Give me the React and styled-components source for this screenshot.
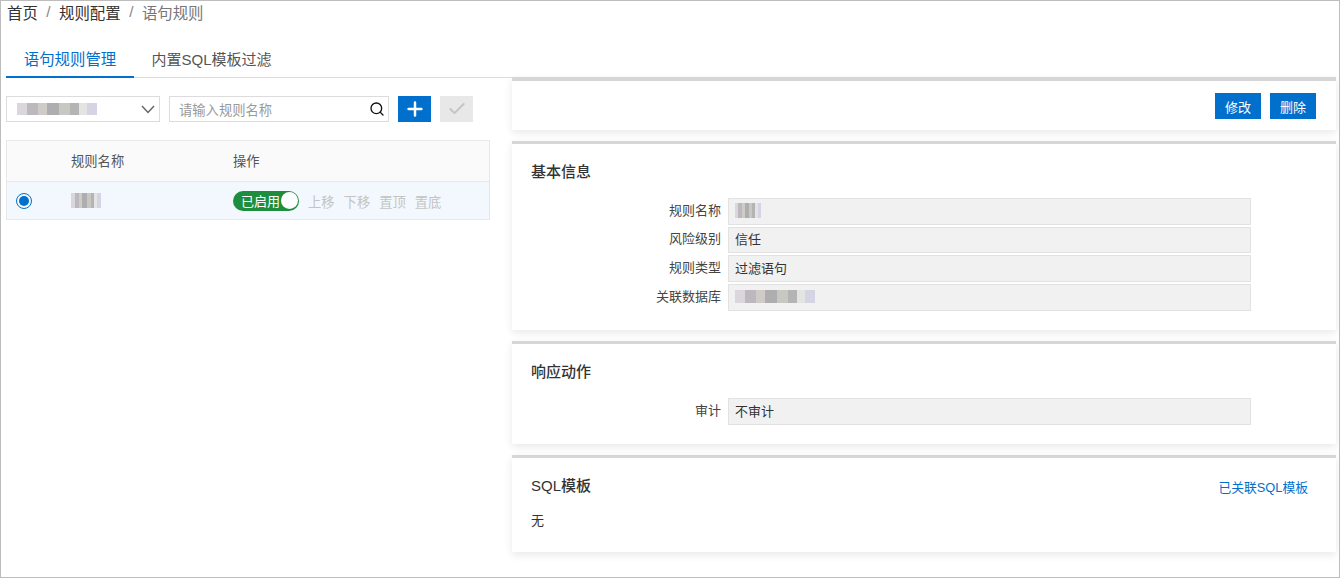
import styled, { createGlobalStyle } from "styled-components";
import { Search, Plus, Check } from "lucide-react";

const GlobalStyle = createGlobalStyle`
    html, body { margin: 0; padding: 0; background: #fff; }
    body {
        font-family: "Liberation Sans", "Noto Sans CJK SC", sans-serif;
        font-size: 13px;
        color: #333;
    }
`

const Frame = styled("div")`
    box-sizing: border-box;
    width: 1340px;
    height: 578px;
    border: 1px solid #bdbdbd;
    overflow: hidden;
`

const Breadcrumb = styled("div")`
    display: flex;
    align-items: center;
    height: 22px;
    padding-left: 6px;
    font-size: 15.4px;
`
const Crumb = styled("span")`
    color: ${(p) => (p.$current ? "#777" : "#333")};
`
const Slash = styled("span")`
    margin: 0 8.5px;
    color: #888;
`

const Tabs = styled("div")`
    display: flex;
    height: 37px;
    margin: 17px 0 0 5px;
    width: 506px;
    border-bottom: 1px solid #ddd;
`
const Tab = styled("div")`
    display: flex;
    align-items: center;
    justify-content: center;
    box-sizing: border-box;
    width: ${(p) => p.$width}px;
    height: 38px;
    font-size: ${(p) => (p.$active ? "15.4px" : "15px")};
    color: ${(p) => (p.$active ? "#0070cc" : "#555")};
    border-bottom: 2px solid ${(p) => (p.$active ? "#0070cc" : "transparent")};
`

const Body = styled("div")`
    display: flex;
    margin-top: -1px;
`
const LeftColumn = styled("div")`
    width: 511px;
    padding: 19px 21px 0 5px;
    box-sizing: border-box;
`
const RightColumn = styled("div")`
    width: 824px;
    display: flex;
    flex-direction: column;
    gap: 11px;
`

const Toolbar = styled("div")`
    display: flex;
    gap: 9px;
    height: 26px;
`
const SelectBox = styled("div")`
    display: flex;
    align-items: center;
    justify-content: space-between;
    box-sizing: border-box;
    width: 154px;
    border: 1px solid #dcdcdc;
    padding: 0 4px 0 10px;
`
const SearchBox = styled("div")`
    display: flex;
    align-items: center;
    justify-content: space-between;
    box-sizing: border-box;
    width: 220px;
    border: 1px solid #dcdcdc;
    padding: 0 3px 0 9px;
    color: #999;
    font-size: 13.3px;
`
const IconButton = styled("button")`
    display: flex;
    align-items: center;
    justify-content: center;
    width: 33px;
    height: 26px;
    padding: 0;
    border: 0;
    background: ${(p) => (p.$disabled ? "#e8e8e8" : "#0070cc")};
    color: ${(p) => (p.$disabled ? "#c4c4c4" : "#fff")};
`

// the reference has these values mosaicked out, so they stay blocks of grey
const Smudge = styled("span")`
    display: inline-block;
    width: ${(p) => p.$width}px;
    height: ${(p) => p.$height}px;
    background:
        linear-gradient(90deg,
            #d9d6dc 0 12%, #bdb8bd 12% 26%, #cfccc8 26% 38%, #aeaeb0 38% 52%,
            #c8c8c2 52% 66%, #b4b4b4 66% 78%, #e4e4e2 78% 88%, #d4d4e4 88% 100%);
    filter: blur(0.6px);
`

const Table = styled("div")`
    margin-top: 18px;
    width: 484px;
    box-sizing: border-box;
    border: 1px solid #e8e8e8;
`
const Row = styled("div")`
    display: grid;
    grid-template-columns: 64px 162px 1fr;
    align-items: center;
    box-sizing: border-box;
    height: ${(p) => p.$height}px;
    background: ${(p) => p.$bg};
    border-bottom: ${(p) => (p.$line ? "1px solid #e8e8e8" : "0")};
    padding-bottom: ${(p) => (p.$line ? "2px" : "0")};
    color: #555;
    font-size: 13.3px;
`
const Radio = styled("span")`
    display: block;
    box-sizing: border-box;
    width: 16px;
    height: 16px;
    margin-left: 9px;
    border-radius: 50%;
    border: 1px solid #0070cc;
    background: #f2f8fd;
    position: relative;
    &::after {
        content: "";
        position: absolute;
        inset: 2px;
        border-radius: 50%;
        background: #0070cc;
    }
`
const Actions = styled("div")`
    display: flex;
    align-items: center;
    gap: 9px;
`
const Switch = styled("div")`
    display: flex;
    align-items: center;
    justify-content: space-between;
    box-sizing: border-box;
    width: 66px;
    height: 20px;
    padding: 0 1px 0 8px;
    border-radius: 10px;
    background: #1e8e3e;
    color: #fff;
    font-size: 13px;
    &::after {
        content: "";
        width: 17px;
        height: 17px;
        border-radius: 50%;
        background: #fff;
    }
`
const Move = styled("span")`
    color: #c4c4c4;
    font-size: 13.3px;
    padding-top: 1px;
`

const Panel = styled("section")`
    box-sizing: border-box;
    height: ${(p) => p.$height}px;
    border-top: ${(p) => p.$bar || 3}px solid #d6d6d6;
    background: #fff;
    box-shadow: 0 3px 8px rgba(0, 0, 0, 0.09);
`
const ButtonBar = styled("div")`
    display: flex;
    justify-content: flex-end;
    gap: 9px;
    padding: 12px 20px 0 0;
`
const ActionButton = styled("button")`
    width: 46px;
    height: 26px;
    padding: 0;
    border: 0;
    background: #0070cc;
    color: #fff;
    font-family: inherit;
    font-size: 13px;
`
const PanelHead = styled("div")`
    display: flex;
    justify-content: space-between;
    align-items: center;
    padding: ${(p) => p.$top || 18}px 28px 0 19px;
`
const PanelTitle = styled("h3")`
    margin: 0;
    font-size: 15px;
    font-weight: 500;
    line-height: 20px;
    color: #333;
`
const PanelLink = styled("a")`
    color: #0070cc;
    font-size: 12.8px;
    margin-top: 2px;
`
const Fields = styled("div")`
    display: grid;
    grid-template-columns: 209px 523px;
    column-gap: 7px;
    row-gap: 2px;
    grid-auto-rows: 26.67px;
    margin-top: 16px;
`
const Label = styled("div")`
    display: flex;
    align-items: center;
    justify-content: flex-end;
    color: #444;
    font-size: 13px;
    padding-bottom: 4px;
`
const Value = styled("div")`
    display: flex;
    align-items: center;
    box-sizing: border-box;
    padding: 0 0 2px 6px;
    background: #f1f1f1;
    border: 1px solid #e2e2e2;
    color: #333;
    font-size: 13px;
`
const EmptyText = styled("div")`
    margin: 14px 0 0 19px;
    color: #333;
    font-size: 13px;
`

const Chevron = () => (
    <svg width="14" height="9" viewBox="0 0 14 9" fill="none" stroke="#666" strokeWidth="1.5">
        <polyline points="1,1 7,7.5 13,1" />
    </svg>
);

const App = () => {
    return (
        <Frame>
            <GlobalStyle />
            <Breadcrumb>
                <Crumb>首页</Crumb>
                <Slash>/</Slash>
                <Crumb>规则配置</Crumb>
                <Slash>/</Slash>
                <Crumb $current>语句规则</Crumb>
            </Breadcrumb>
            <Tabs>
                <Tab $active $width={128}>语句规则管理</Tab>
                <Tab $width={155}>内置SQL模板过滤</Tab>
            </Tabs>
            <Body>
                <LeftColumn>
                    <Toolbar>
                        <SelectBox>
                            <Smudge $width={80} $height={12} />
                            <Chevron />
                        </SelectBox>
                        <SearchBox>
                            请输入规则名称
                            <Search size={16} color="#111" strokeWidth={2} />
                        </SearchBox>
                        <IconButton><Plus size={22} strokeWidth={2.7} /></IconButton>
                        <IconButton $disabled><Check size={20} strokeWidth={2.4} /></IconButton>
                    </Toolbar>
                    <Table>
                        <Row $height={41} $bg="#fafafa" $line>
                            <span />
                            <span>规则名称</span>
                            <span>操作</span>
                        </Row>
                        <Row $height={37} $bg="#f2f8fd">
                            <Radio />
                            <Smudge $width={30} $height={15} />
                            <Actions>
                                <Switch>已启用</Switch>
                                <Move>上移</Move>
                                <Move>下移</Move>
                                <Move>置顶</Move>
                                <Move>置底</Move>
                            </Actions>
                        </Row>
                    </Table>
                </LeftColumn>
                <RightColumn>
                    <Panel $height={53} $bar={4}>
                        <ButtonBar>
                            <ActionButton>修改</ActionButton>
                            <ActionButton>删除</ActionButton>
                        </ButtonBar>
                    </Panel>
                    <Panel $height={189}>
                        <PanelHead><PanelTitle>基本信息</PanelTitle></PanelHead>
                        <Fields>
                            <Label>规则名称</Label>
                            <Value><Smudge $width={26} $height={15} /></Value>
                            <Label>风险级别</Label>
                            <Value>信任</Value>
                            <Label>规则类型</Label>
                            <Value>过滤语句</Value>
                            <Label>关联数据库</Label>
                            <Value><Smudge $width={80} $height={13} /></Value>
                        </Fields>
                    </Panel>
                    <Panel $height={103}>
                        <PanelHead><PanelTitle>响应动作</PanelTitle></PanelHead>
                        <Fields>
                            <Label>审计</Label>
                            <Value>不审计</Value>
                        </Fields>
                    </Panel>
                    <Panel $height={97}>
                        <PanelHead $top={17}>
                            <PanelTitle>SQL模板</PanelTitle>
                            <PanelLink>已关联SQL模板</PanelLink>
                        </PanelHead>
                        <EmptyText>无</EmptyText>
                    </Panel>
                </RightColumn>
            </Body>
        </Frame>
    );
};

export default App;
